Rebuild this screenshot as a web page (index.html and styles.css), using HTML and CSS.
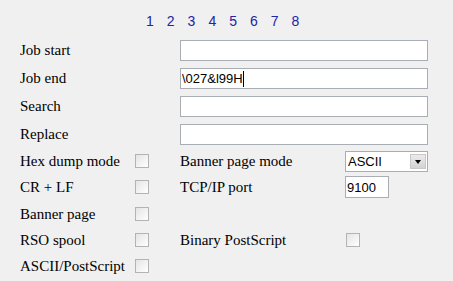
FILE: index.html
```html
<!DOCTYPE html>
<html lang="en">
<head>
    <meta charset="UTF-8">
    <meta name="viewport" content="width=device-width, initial-scale=1.0">
    <title>Printer port settings</title>
    <link rel="stylesheet" href="styles.css">
</head>
<body>
    <div class="page">
        <!-- Pestañas de página -->
        <div class="tabs">
            <span>1</span><span>2</span><span>3</span><span>4</span><span>5</span><span>6</span><span>7</span><span>8</span>
        </div>

        <div class="form">
            <label class="lbl span-left">Job start</label>
            <input type="text" class="field span-right">

            <label class="lbl span-left">Job end</label>
            <div class="caret-field span-right">
                <input type="text" class="field" value="\027&amp;l99H">
            </div>

            <label class="lbl span-left">Search</label>
            <input type="text" class="field span-right">

            <label class="lbl span-left">Replace</label>
            <input type="text" class="field span-right">

            <!-- Opciones -->
            <span class="lbl">Hex dump mode</span>
            <span class="check"></span>
            <span class="lbl">Banner page mode</span>
            <div class="select-box">
                <select>
                    <option>ASCII</option>
                    <option>PostScript</option>
                </select>
                <span class="arrow"></span>
            </div>

            <span class="lbl">CR + LF</span>
            <span class="check"></span>
            <span class="lbl">TCP/IP port</span>
            <input type="text" class="port" value="9100">

            <span class="lbl">Banner page</span>
            <span class="check"></span>
            <span></span>
            <span></span>

            <span class="lbl">RSO spool</span>
            <span class="check"></span>
            <span class="lbl">Binary PostScript</span>
            <span class="check check-right"></span>

            <span class="lbl">ASCII/PostScript</span>
            <span class="check"></span>
            <span></span>
            <span></span>
        </div>
    </div>
</body>
</html>
```

FILE: styles.css
```css
body {
    margin: 0;
    background-color: #f0f0f0;
    font-family: "Liberation Serif", "Times New Roman", serif;
    color: #000;
}

.page {
    padding: 13px 0 0 20px;
}

.tabs {
    padding-left: 126px;
    height: 16px;
    line-height: 16px;
    font-family: "Liberation Sans", Arial, sans-serif;
    font-size: 14px;
    color: #2323a3;
    white-space: nowrap;
}

.tabs span {
    display: inline-block;
    width: 20.8px;
}

.form {
    margin-top: 7px;
    display: grid;
    grid-template-columns: 115px 45px 165px 83px;
    grid-template-rows: 28px 28px 28px 28px 26px 26px 28px 24px 28px;
    align-items: center;
}

.lbl {
    font-size: 15px;
    white-space: nowrap;
}

.span-left {
    grid-column: 1 / 3;
}

.span-right {
    grid-column: 3 / 5;
}

.field,
.port {
    box-sizing: border-box;
    height: 21px;
    border: 1px solid #a9adb4;
    background: #fff;
    padding: 0 1px;
    margin: 0;
    font-family: "Liberation Sans", Arial, sans-serif;
    font-size: 13px;
    color: #000;
    outline: none;
}

.field {
    width: 248px;
}

.caret-field {
    position: relative;
    height: 21px;
}

.caret-field::after {
    content: "";
    position: absolute;
    left: 63px;
    top: 3px;
    width: 1px;
    height: 16px;
    background: #000;
}

.port {
    width: 44px;
    height: 22px;
}

.check {
    box-sizing: border-box;
    display: block;
    width: 14px;
    height: 14px;
    border: 1px solid #b3b3b3;
    background: linear-gradient(135deg, #e4e4e4, #ffffff);
}

.check-right {
    margin-left: 1px;
}

.select-box {
    position: relative;
    width: 83px;
    height: 21px;
}

.select-box select {
    appearance: none;
    -webkit-appearance: none;
    box-sizing: border-box;
    width: 83px;
    height: 21px;
    margin: 0;
    padding: 0 2px;
    border: 1px solid #a9adb4;
    border-radius: 0;
    background: #fff;
    font-family: "Liberation Sans", Arial, sans-serif;
    font-size: 13px;
    color: #000;
    outline: none;
}

.select-box .arrow {
    position: absolute;
    right: 2px;
    top: 3px;
    width: 16px;
    height: 15px;
    box-sizing: border-box;
    border: 1px solid #c8c8c8;
    background: linear-gradient(#ececec, #d2d2d2);
}

.select-box .arrow::after {
    content: "";
    position: absolute;
    left: 4px;
    top: 5px;
    border-left: 3.5px solid transparent;
    border-right: 3.5px solid transparent;
    border-top: 4px solid #000;
}
```
